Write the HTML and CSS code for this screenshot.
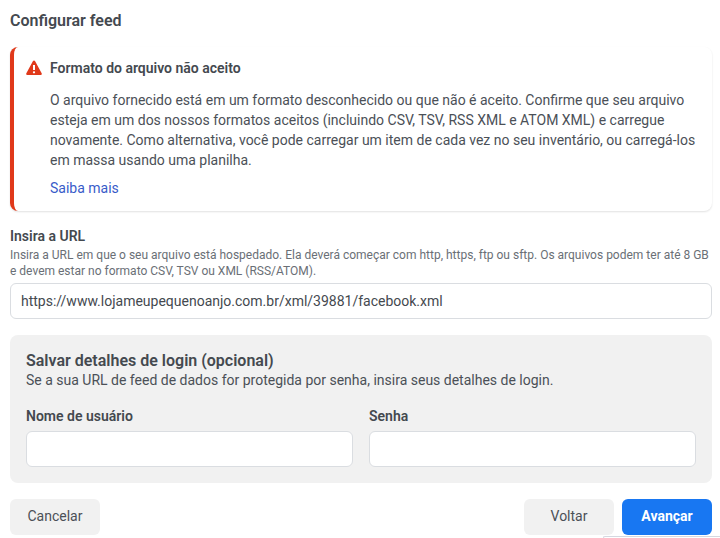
FILE: index.html
```html
<!DOCTYPE html>
<html lang="pt-BR">
<head>
<meta charset="utf-8">
<title>Configurar feed</title>
<link rel="stylesheet" href="styles.css">
</head>
<body>
<main class="page">
  <h1 class="title">Configurar feed</h1>
  <section class="alert">
    <div class="alert-head">
      <svg class="alert-icon" width="16" height="16" viewBox="0 0 16 16" aria-hidden="true"><path fill="#e0391a" fill-rule="evenodd" d="M8 .6c.5 0 .9.25 1.15.7l6.5 11.9c.45.85-.12 1.9-1.1 1.9H1.45c-.98 0-1.55-1.05-1.1-1.9l6.5-11.9C7.1.85 7.5.6 8 .6zM7 5v5h2V5H7zm1 6.2a1.15 1.15 0 1 0 0 2.3 1.15 1.15 0 0 0 0-2.3z"/></svg>
      <h2 class="alert-title">Formato do arquivo não aceito</h2>
    </div>
    <p class="alert-text">O arquivo fornecido está em um formato desconhecido ou que não é aceito. Confirme que seu arquivo esteja em um dos nossos formatos aceitos (incluindo CSV, TSV, RSS XML e ATOM XML) e carregue novamente. Como alternativa, você pode carregar um item de cada vez no seu inventário, ou carregá-los em massa usando uma planilha.</p>
    <a class="alert-link" href="#">Saiba mais</a>
  </section>
  <section class="url-field">
    <div class="label">Insira a URL</div>
    <p class="hint">Insira a URL em que o seu arquivo está hospedado. Ela deverá começar com http, https, ftp ou sftp. Os arquivos podem ter até 8 GB e devem estar no formato CSV, TSV ou XML (RSS/ATOM).</p>
    <div class="input input-url">https://www.lojameupequenoanjo.com.br/xml/39881/facebook.xml</div>
  </section>
  <section class="login">
    <h2 class="login-title">Salvar detalhes de login (opcional)</h2>
    <p class="login-sub">Se a sua URL de feed de dados for protegida por senha, insira seus detalhes de login.</p>
    <div class="login-fields">
      <div class="field"><div class="label">Nome de usuário</div><div class="input"></div></div>
      <div class="field"><div class="label">Senha</div><div class="input"></div></div>
    </div>
  </section>
  <footer class="actions">
    <button class="btn">Cancelar</button>
    <div class="actions-right">
      <button class="btn">Voltar</button>
      <button class="btn btn-primary">Avançar</button>
    </div>
  </footer>
</main>
<div class="peek"></div>
</body>
</html>
```
FILE: styles.css
```css
html, body { margin: 0; padding: 0; height: 538px; overflow: hidden; background: #fff; }
body { font-family: Roboto, "Liberation Sans", sans-serif; font-size: 14px; color: #3c4043; position: relative; }
.page { padding: 0 8px 0 10px; display: flex; flex-direction: column; }
.title { margin: 11px 0 0; font-size: 16px; line-height: 20px; font-weight: 600; color: #44494f; }
.alert { margin-top: 16px; height: 164px; box-sizing: border-box; border-left: 4px solid #e0391a; border-radius: 8px; padding: 12px 12px 0 12px; box-shadow: 0 1px 2px rgba(0,0,0,.12); background: #fff; }
.alert-head { display: flex; align-items: center; gap: 8px; height: 18px; }
.alert-icon { flex: none; }
.alert-title { margin: 0; font-size: 14px; line-height: 18px; font-weight: 600; color: #44494f; }
.alert-text { margin: 13px 0 0 24px; font-size: 14px; line-height: 20px; color: #4b5057; }
.alert-link { display: block; margin: 8px 0 0 24px; font-size: 14px; line-height: 20px; color: #385bc9; text-decoration: none; }
.url-field { margin-top: 16px; }
.label { font-size: 14px; line-height: 18px; font-weight: 600; color: #44494f; }
.hint { margin: 2px 0 4px; font-size: 12px; line-height: 16px; color: #6a6f76; }
.input { height: 36px; box-sizing: border-box; border: 1px solid #dadde1; border-radius: 6px; background: #fff; }
.input-url { padding: 0 10px; font-size: 14px; line-height: 34px; color: #44494f; }
.login { margin-top: 16px; height: 148px; box-sizing: border-box; background: #f1f1f1; border-radius: 8px; padding: 16px; }
.login-title { margin: 0; font-size: 16px; line-height: 20px; font-weight: 600; color: #44494f; }
.login-sub { margin: 0; font-size: 14px; line-height: 18px; color: #4b5057; }
.login-fields { display: grid; grid-template-columns: 1fr 1fr; gap: 16px; margin-top: 18px; }
.field .label { margin-bottom: 6px; }
.actions { margin-top: 16px; display: flex; justify-content: space-between; }
.actions-right { display: flex; gap: 8px; }
.btn { width: 90px; height: 36px; border: 0; border-radius: 6px; background: #f1f1f1; font-family: inherit; font-size: 14px; color: #4b5057; padding: 0 0 2px; }
.btn-primary { background: #1877f2; color: #fff; font-weight: 700; }
.peek { position: absolute; left: 603px; top: 536px; width: 117px; height: 2px; box-sizing: border-box; border: 1px solid #d5d8e0; border-bottom: 0; border-right: 0; border-radius: 3px 0 0 0; }
```
